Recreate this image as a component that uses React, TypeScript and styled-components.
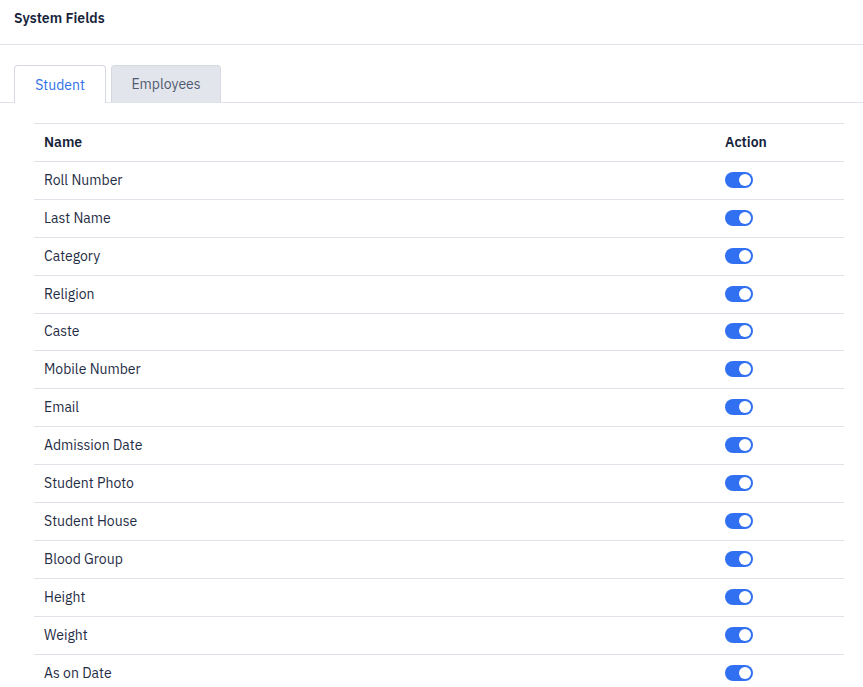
import React from "react";
import styled, { createGlobalStyle } from "styled-components";

const Global = createGlobalStyle`
  html, body { margin: 0; padding: 0; background: #ffffff; }
  body { font-family: "IBM Plex Sans", Inter, "Noto Sans", sans-serif; color: #1b2a41; }
`;

const Page = styled.div`
  width: 863px;
  display: flex;
  flex-direction: column;
`;

const Header = styled.div`
  height: 45px;
  box-sizing: border-box;
  padding: 0 14px 9px;
  display: flex;
  align-items: center;
  border-bottom: 1px solid #e1e3ea;
  font-size: 14px;
  font-weight: 600;
  color: #16233a;
`;

const TabBar = styled.div`
  margin-top: 20px;
  padding-left: 14px;
  display: flex;
  align-items: flex-end;
  gap: 5px;
  border-bottom: 1px solid #e1e3ea;
  height: 38px;
  box-sizing: border-box;
`;

const Tab = styled.div<{ $active?: boolean }>`
  height: ${(p) => (p.$active ? "38px" : "37px")};
  box-sizing: border-box;
  display: flex;
  align-items: center;
  justify-content: center;
  font-size: 14px;
  border: 1px solid #d6d9e2;
  border-bottom: none;
  border-radius: 4px 4px 0 0;
  margin-bottom: ${(p) => (p.$active ? "-1px" : "0")};
  background: ${(p) => (p.$active ? "#ffffff" : "#e3e5ec")};
  color: ${(p) => (p.$active ? "#2f6fe8" : "#4f5a70")};
  width: ${(p) => (p.$active ? "92px" : "110px")};
`;

const Table = styled.div`
  margin: 20px 19px 0 34px;
  border-top: 1px solid #e1e3ea;
  display: flex;
  flex-direction: column;
`;

const Row = styled.div<{ $head?: boolean }>`
  display: grid;
  grid-template-columns: 1fr 119px;
  align-items: center;
  height: 37.92px;
  box-sizing: border-box;
  padding-bottom: 1px;
  border-bottom: 1px solid #e1e3ea;
  font-size: 14px;
  font-weight: ${(p) => (p.$head ? 600 : 400)};
  color: ${(p) => (p.$head ? "#16233a" : "#1f2d45")};
`;

const Cell = styled.div`
  padding-left: 10px;
`;

const ActionCell = styled.div`
  display: flex;
  align-items: center;
`;

const Toggle = styled.div`
  width: 28px;
  height: 16px;
  border-radius: 8px;
  background: #3170f0;
  display: flex;
  align-items: center;
  justify-content: flex-end;
  padding: 0 2px;
  box-sizing: border-box;
`;

const Knob = styled.div`
  width: 12px;
  height: 12px;
  border-radius: 50%;
  background: #ffffff;
`;

const fields = [
  "Roll Number",
  "Last Name",
  "Category",
  "Religion",
  "Caste",
  "Mobile Number",
  "Email",
  "Admission Date",
  "Student Photo",
  "Student House",
  "Blood Group",
  "Height",
  "Weight",
  "As on Date",
];

export default function App() {
  return (
    <Page>
      <Global />
      <Header>System Fields</Header>
      <TabBar>
        <Tab $active>Student</Tab>
        <Tab>Employees</Tab>
      </TabBar>
      <Table>
        <Row $head>
          <Cell>Name</Cell>
          <ActionCell>Action</ActionCell>
        </Row>
        {fields.map((f) => (
          <Row key={f}>
            <Cell>{f}</Cell>
            <ActionCell>
              <Toggle>
                <Knob />
              </Toggle>
            </ActionCell>
          </Row>
        ))}
      </Table>
    </Page>
  );
}
